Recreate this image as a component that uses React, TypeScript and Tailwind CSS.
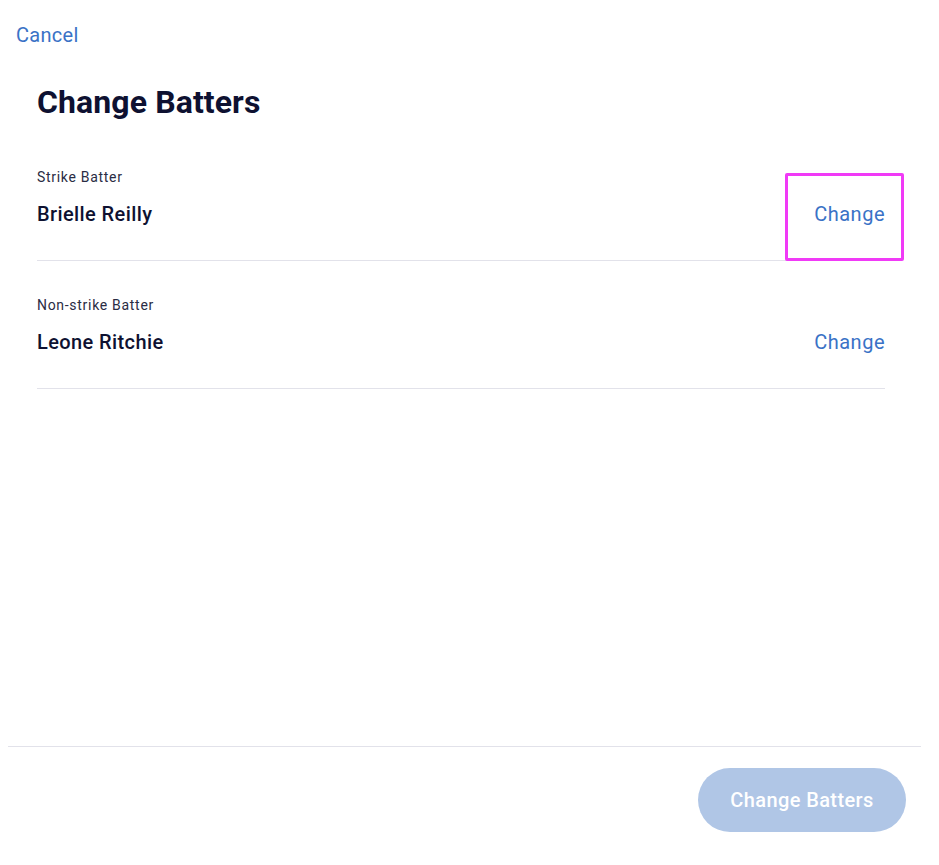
import React from "react";

type Batter = { label: string; name: string; highlighted?: boolean };

const batters: Batter[] = [
  { label: "Strike Batter", name: "Brielle Reilly", highlighted: true },
  { label: "Non-strike Batter", name: "Leone Ritchie" },
];

export default function App() {
  return (
    <div className="h-screen w-full flex flex-col bg-white font-['Roboto','Liberation_Sans',sans-serif]">
      {/* Header */}
      <div className="px-4 pt-[21px]">
        <button className="text-[20px] leading-7 text-[#3a72c6] tracking-[0.3px]">Cancel</button>
      </div>

      {/* Body */}
      <div className="flex-1 pl-[37px] pr-[54px]">
        <h1 className="mt-[35px] mb-[13px] text-[32px] leading-9 font-bold text-[#0e1131] tracking-[0.1px]">
          Change Batters
        </h1>

        {batters.map((b) => (
          <div key={b.name} className="relative pt-[34px] pb-[32px] border-b border-[#e2e2ea]">
            <div className="text-[14px] leading-5 text-[#2a2c44] tracking-[0.7px]">{b.label}</div>
            <div className="mt-[13px] flex items-center justify-between">
              <span className="text-[20px] leading-7 font-medium text-[#0e1131] tracking-[0.4px]">{b.name}</span>
              <button className="text-[20px] leading-7 text-[#3a72c6] tracking-[0.5px]">Change</button>
            </div>
            {b.highlighted && (
              <div className="absolute top-[40px] right-[-19px] w-[119px] h-[88px] border-[3px] border-[#f03af6] rounded-[2px] pointer-events-none" />
            )}
          </div>
        ))}
      </div>

      {/* Footer */}
      <div className="ml-2 mr-[18px] border-t border-[#e2e2ea] pt-[21px] pb-[33px] pr-[15px] flex justify-end">
        <button className="h-16 w-[208px] rounded-full bg-[#b0c6e6] text-white text-[20px] font-medium tracking-[0.4px]">
          Change Batters
        </button>
      </div>
    </div>
  );
}
